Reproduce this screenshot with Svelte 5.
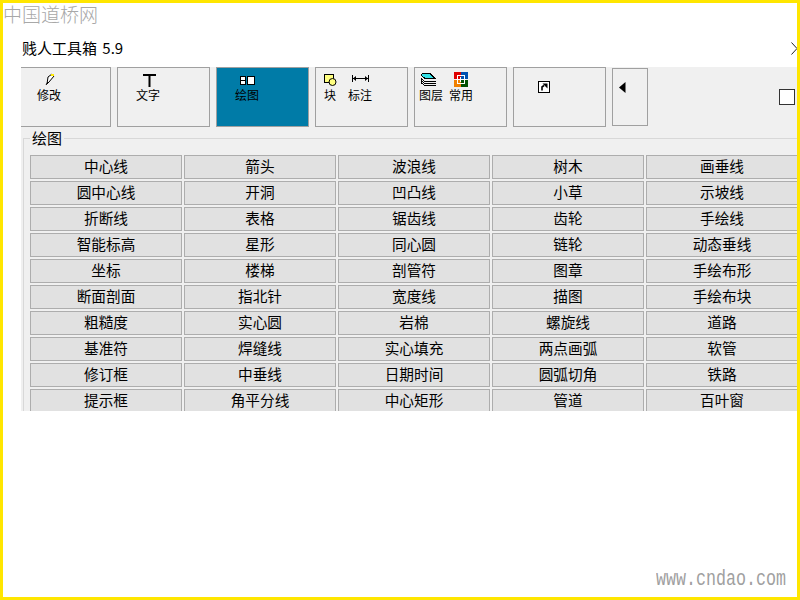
<script>
  const rows = [
    ['中心线', '箭头', '波浪线', '树木', '画垂线'],
    ['圆中心线', '开洞', '凹凸线', '小草', '示坡线'],
    ['折断线', '表格', '锯齿线', '齿轮', '手绘线'],
    ['智能标高', '星形', '同心圆', '链轮', '动态垂线'],
    ['坐标', '楼梯', '剖管符', '图章', '手绘布形'],
    ['断面剖面', '指北针', '宽度线', '描图', '手绘布块'],
    ['粗糙度', '实心圆', '岩棉', '螺旋线', '道路'],
    ['基准符', '焊缝线', '实心填充', '两点画弧', '软管'],
    ['修订框', '中垂线', '日期时间', '圆弧切角', '铁路'],
    ['提示框', '角平分线', '中心矩形', '管道', '百叶窗']
  ];
  const labels = rows.flat();
</script>

<div class="frame">
  <div class="mark-top">中国道桥网</div>

  <header class="titlebar">
    <span class="title">贱人工具箱 5.9</span>
    <svg class="close" width="6" height="13" viewBox="0 0 6 13">
      <path d="M0.5 0.5 L6 6.5 L0.5 12.5" fill="none" stroke="#222" stroke-width="1" />
    </svg>
  </header>

  <main class="panel">
    <div class="toolbar">
      <button class="tool first">
        <span class="item">
          <svg class="icon" width="15" height="15" viewBox="0 0 15 15">
            <path d="M5 12 L6 5 L10 2 L12 4 L7 10 Z" fill="#fff" stroke="#000" />
            <rect x="9" y="2" width="3" height="2" fill="#ffea00" />
            <path d="M4 13 L6 10" stroke="#000" />
          </svg>
          修改
        </span>
      </button>

      <button class="tool">
        <span class="item">
          <svg class="icon shift-t" width="15" height="15" viewBox="0 0 15 15">
            <path d="M1 3 H14 M7.5 3 V15" fill="none" stroke="#000" stroke-width="2" />
          </svg>
          文字
        </span>
      </button>

      <button class="tool active">
        <span class="item">
          <svg class="icon" width="15" height="15" viewBox="0 0 15 15" shape-rendering="crispEdges">
            <rect x="0.5" y="4.5" width="5" height="8" fill="#fff" stroke="#000" />
            <path d="M0 8.5 H6" stroke="#000" />
            <rect x="7.5" y="4.5" width="7" height="8" fill="#fff" stroke="#000" />
          </svg>
          绘图
        </span>
      </button>

      <button class="tool pair block">
        <span class="item">
          <svg class="icon" width="15" height="15" viewBox="0 0 15 15">
            <rect x="1.5" y="2.5" width="9" height="8" fill="#ffff80" stroke="#000" />
            <circle cx="9.5" cy="10" r="3.5" fill="#ffff80" stroke="#000" />
          </svg>
          块
        </span>
        <span class="item">
          <svg class="icon" width="17" height="15" viewBox="0 0 17 15">
            <path d="M0.5 3 V10 M16.5 3 V10 M1 6.5 H16" stroke="#000" fill="none" />
            <path d="M1 6.5 L4 4 V9 Z M16 6.5 L13 4 V9 Z" fill="#000" />
          </svg>
          标注
        </span>
      </button>

      <button class="tool pair layer">
        <span class="item">
          <svg class="icon shift-layer" width="17" height="15" viewBox="0 0 17 15" shape-rendering="crispEdges">
            <path d="M1 6.5 L5 9.5 H16 M1 8.5 L5 11.5 H16 M1 10.5 L5 13.5 H16" fill="none" stroke="#000" />
            <path d="M1 3 L3 1.5 H10 L15 6.5 H5 Z" fill="#33e0e6" stroke="#000" stroke-width="1" />
          </svg>
          图层
        </span>
        <span class="item">
          <svg class="icon" width="14" height="15" viewBox="0 0 14 15" shape-rendering="crispEdges">
            <rect x="0" y="0" width="7" height="7" fill="#e00000" />
            <rect x="7" y="0" width="7" height="7" fill="#0050b0" />
            <rect x="0" y="8" width="7" height="7" fill="#f08000" />
            <rect x="7" y="8" width="7" height="7" fill="#005000" />
            <path d="M3.5 3.5 H10.5 V11.5 H3.5 Z M6.5 5 V10 M2 7.5 H12" fill="none" stroke="#fff" />
          </svg>
          常用
        </span>
      </button>

      <button class="tool shortcut">
        <svg width="12" height="12" viewBox="0 0 12 12">
          <rect x="0.5" y="0.5" width="11" height="11" fill="#fff" stroke="#000" />
          <path d="M4 9.5 V6 L6 4.5" fill="none" stroke="#000" stroke-width="1.6" />
          <path d="M4.5 2.5 H9.5 V7.5 Z" fill="#000" />
        </svg>
      </button>

      <button class="tool back">
        <svg width="7" height="11" viewBox="0 0 7 11">
          <path d="M6.5 0 V11 L0 5.5 Z" fill="#000" />
        </svg>
      </button>

      <input class="check" type="checkbox" />
    </div>

    <fieldset class="group">
      <legend>绘图</legend>
      <div class="grid">
        {#each labels as label}
          <button class="cmd">{label}</button>
        {/each}
      </div>
    </fieldset>
  </main>

  <div class="mark-bottom">www.cndao.com</div>
</div>

<style>
  :global(body) {
    margin: 0;
    background: #fff;
  }

  .frame {
    position: relative;
    box-sizing: border-box;
    width: 800px;
    height: 600px;
    border: 3px solid #ffe600;
    background: #fff;
    overflow: hidden;
    font-family: "Noto Sans CJK SC", "Liberation Sans", sans-serif;
    color: #000;
  }

  .mark-top {
    position: absolute;
    left: 0;
    top: 0;
    font-family: "Noto Sans CJK SC", sans-serif;
    font-size: 19px;
    line-height: 22px;
    font-weight: 300;
    color: #a8a8a8;
  }

  .mark-bottom {
    position: absolute;
    left: 653px;
    top: 565px;
    font-family: "Liberation Mono", monospace;
    font-size: 16.67px;
    line-height: 24px;
    color: #a0a0a0;
    transform: scaleY(1.35);
  }

  .titlebar {
    box-sizing: border-box;
    height: 64px;
    padding: 35px 0 0 19px;
    display: flex;
    justify-content: space-between;
    align-items: flex-start;
  }

  .title {
    font-size: 15px;
    line-height: 20px;
    word-spacing: 2px;
  }

  .close {
    margin-top: 4px;
  }

  .panel {
    margin-left: 18px;
    height: 344px;
    background: #f0f0f0;
    overflow: hidden;
  }

  .toolbar {
    display: flex;
    gap: 6px;
    height: 61px;
    align-items: flex-start;
  }

  .tool {
    box-sizing: border-box;
    width: 93px;
    height: 60px;
    padding: 4px 0 0 18px;
    border: 1px solid #a0a0a0;
    border-radius: 0;
    background: #f0f0f0;
    display: flex;
    align-items: flex-start;
    font: inherit;
    font-size: 12px;
    line-height: 16px;
    color: #000;
  }

  .tool.first {
    width: 90px;
    padding-left: 16px;
    border-left: none;
  }

  .tool.active {
    background: #007ba7;
  }

  .tool.pair {
    gap: 6px;
  }

  .tool.block {
    padding-left: 2px;
  }

  .tool.layer {
    padding-left: 4px;
  }

  .tool.shortcut {
    padding: 13px 0 0 24px;
  }

  .tool.back {
    width: 36px;
    height: 58px;
    margin-top: 1px;
    padding: 13px 0 0 6px;
  }

  .item {
    width: 24px;
    display: flex;
    flex-direction: column;
    align-items: center;
    white-space: nowrap;
  }

  .icon {
    display: block;
  }

  .shift-t {
    margin-left: 2px;
  }

  .shift-layer {
    margin-right: 6px;
  }

  .check {
    appearance: none;
    box-sizing: border-box;
    width: 16px;
    height: 16px;
    margin: 22px 2px 0 auto;
    border: 1px solid #333;
    background: #fff;
  }

  .group {
    box-sizing: border-box;
    margin: 0 0 0 2px;
    padding: 7px 0 0 6px;
    border: none;
    border-top: 1px solid #d8d8d8;
    border-left: 1px solid #d8d8d8;
    min-width: 0;
  }

  legend {
    padding: 0 2px;
    font-size: 15px;
    line-height: 20px;
  }

  .grid {
    display: grid;
    grid-template-columns: repeat(5, 152px);
    grid-auto-rows: 24px;
    gap: 2px;
  }

  .cmd {
    box-sizing: border-box;
    padding: 0 0 3px;
    border: 1px solid #adadad;
    border-radius: 0;
    background: #e1e1e1;
    font: inherit;
    font-size: 14.67px;
    line-height: 19px;
    color: #000;
    text-align: center;
  }
</style>
